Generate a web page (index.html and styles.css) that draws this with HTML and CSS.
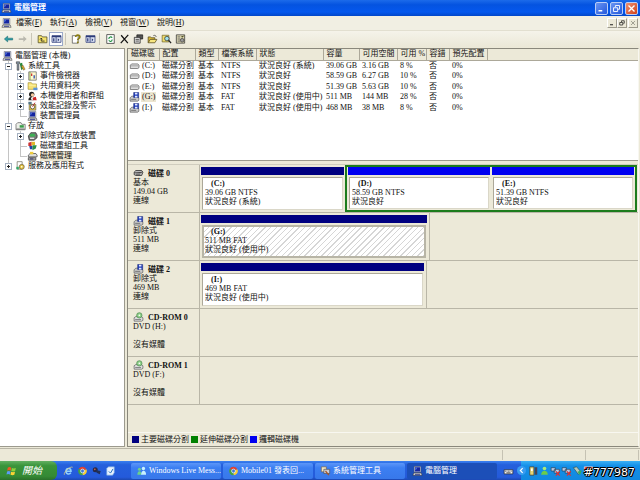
FILE: index.html
```html
<!DOCTYPE html>
<html lang="zh-TW">
<head>
    <meta charset="UTF-8">
    <meta name="viewport" content="width=device-width, initial-scale=1.0">
    <title>電腦管理</title>
    <link rel="stylesheet" href="styles.css">
</head>
<body>
    <!-- Iconos -->
    <svg class="sprite" aria-hidden="true">
        <symbol id="pc" viewBox="0 0 12 12"><path fill="#c9cdd8" stroke="#555b70" stroke-width=".6" d="M2 .6h8v7H2z"/><path fill="#1424a0" d="M3 1.6h6v5H3z"/><path fill="#5b83e8" d="M3.5 2h2L4 5h-.5z"/><path fill="#d8d8d8" stroke="#333" stroke-width=".6" d="M1.5 8.4h9l1 2.8H.5z"/><path stroke="#222a80" d="M3 10h6"/></symbol>
        <symbol id="tools" viewBox="0 0 12 12"><path fill="#89a" stroke="#333" stroke-width=".7" d="M1 1h4v2H4v8H2V3H1z"/><path fill="#2a8a3a" d="M5 3l3-1 1 7-2 2z"/><path fill="#d8a92e" stroke="#543" stroke-width=".5" d="M7 6l2-1 2.500 5-2 1z"/></symbol>
        <symbol id="event" viewBox="0 0 12 12"><path fill="#fffbd0" stroke="#555" stroke-width=".8" d="M1.500 1h9v10h-9z"/><path stroke="#7a9a40" d="M3 1v10"/><path stroke="#c33" stroke-width="1.500" d="M5 3v3"/><path stroke="#24a" stroke-width="1.500" d="M8 5v4"/></symbol>
        <symbol id="folder" viewBox="0 0 12 12"><path fill="#f7e275" stroke="#9a8420" stroke-width=".7" d="M.7 2h4l1 1.500h5v6.500h-10z"/><path fill="#fff6b0" d="M1.500 4.500h8.500v1H1.500z"/><path fill="#5a93d8" d="M7 8h5v3H7z"/></symbol>
        <symbol id="users" viewBox="0 0 12 12"><circle cx="5" cy="4" r="3.200" fill="#222"/><circle cx="6" cy="4.800" r="2" fill="#f3c9a0"/><path fill="#222" d="M1 11c0-3 2-4 4-4l2 4z"/><path fill="#c22" d="M6 8l4-1 1 4H6z"/><path fill="#fff" d="M4 8l2-.5.5 3.500H5z"/></symbol>
        <symbol id="perf" viewBox="0 0 12 12"><path fill="#e6c84a" stroke="#554" stroke-width=".7" d="M2 4h8v7H2z"/><circle cx="6" cy="7" r="2.500" fill="#fff" stroke="#333" stroke-width=".8"/><path stroke="#b22" d="M6 7l3-5"/><path fill="#578" d="M1 1h4v3H1z"/></symbol>
        <symbol id="store" viewBox="0 0 12 12"><path fill="#eef0ea" stroke="#555" stroke-width=".8" d="M.6 4l2-2h4l1 2h4v6.500H.6z"/><path fill="#3a9e4a" d="M5 5h5v3H5z"/><path fill="#777" d="M1 9h10v1.500H1z"/></symbol>
        <symbol id="removable" viewBox="0 0 12 12"><path fill="#777" stroke="#222" stroke-width=".8" d="M1 6l3-4h6l1.500 3v3L8 11H2z"/><ellipse cx="6" cy="5" rx="3.500" ry="2" fill="#3fae55"/><path fill="#eee" d="M3 8h5v1.500H3z"/></symbol>
        <symbol id="defrag" viewBox="0 0 12 12"><path fill="#c33" d="M1 2l4-1v5H1z"/><path fill="#e0b92c" d="M5 1h4v4H5z"/><path fill="#24a" d="M2 6h4v4H3z"/><path fill="#2a8f4a" d="M6 5h5l-1 4-4 2z"/></symbol>
        <symbol id="diskmgr" viewBox="0 0 12 12"><path fill="#ddd" stroke="#333" stroke-width=".8" d="M1 5l2-2h7l1.500 2v2H1z"/><path fill="#aaa" stroke="#333" stroke-width=".8" d="M1 8h9v3H1z"/><path fill="#eecb3c" d="M3 1h4v3H3z"/><path stroke="#226" d="M3 9.500h4"/></symbol>
        <symbol id="services" viewBox="0 0 12 12"><path fill="#fff" stroke="#665" stroke-width=".8" d="M2 .8h6v9H2z"/><circle cx="7.500" cy="7" r="3" fill="#e3c43e" stroke="#654" stroke-width=".8"/><circle cx="7.500" cy="7" r="1" fill="#fff"/><path fill="#3a6" d="M1 7h3v3H1z"/></symbol>
        <symbol id="drive" viewBox="0 0 12 12"><path fill="#ddd" stroke="#555" stroke-width=".8" d="M1 5l1.500-1.500h7.500L11.400 5v3l-1.500 1H1z"/><path stroke="#888" stroke-width=".8" d="M1 5.800h10"/></symbol>
        <symbol id="disk" viewBox="0 0 12 12"><path fill="#bbb" stroke="#222" stroke-width=".9" d="M.8 5l2-2h7l1.500 2-1.500 4H3L.8 8z"/><path stroke="#333" stroke-width=".8" d="M1 5.800h7l2.500-1M3 7.500h5"/></symbol>
        <symbol id="usb" viewBox="0 0 12 12"><path fill="#c9c9c9" stroke="#555" stroke-width=".8" d="M.7 7l2-2h6l2.500 2v3l-1.500 1h-9z"/><path fill="#1d39b8" stroke="#112070" stroke-width=".6" d="M5 .6h6v6H5z"/><path fill="#dfe8ff" d="M6.500 1h3v2h-3zM6.500 4.500h3v2h-3z"/><path stroke="#666" d="M2 8.800h6"/></symbol>
        <symbol id="cdrom" viewBox="0 0 12 12"><path fill="#ddd" stroke="#555" stroke-width=".8" d="M.7 7l2-1.500h7L11.300 7v3l-1.500 1h-9z"/><circle cx="7" cy="4" r="3.200" fill="#8fd08a" stroke="#36783a" stroke-width=".7"/><circle cx="7" cy="4" r="1" fill="#fff"/><path stroke="#777" d="M2 9h7"/></symbol>
        <symbol id="back" viewBox="0 0 12 12"><path fill="#2f9fa6" stroke="#136068" stroke-width=".6" d="M1 6l4-3.500V5h6v2.200H5v2.300z"/></symbol>
        <symbol id="fwd" viewBox="0 0 12 12"><path fill="#b9b8ae" d="M11 6L7 2.500V5H1.500v2.200H7v2.300z"/></symbol>
        <symbol id="up" viewBox="0 0 12 12"><path fill="#f6e36c" stroke="#4b471c" stroke-width=".9" d="M.8 2h4l1 1.500h5.500v7H.8z"/><path fill="none" stroke="#222" d="M8.500 8.500h-4V5M3 6.500L4.500 5 6 6.500"/></symbol>
        <symbol id="panes" viewBox="0 0 12 12"><path fill="#dfe6f6" stroke="#2b3a78" stroke-width=".9" d="M.6 2h10.800v8H.6z"/><path fill="#2b3a78" d="M.6 2h10.800v1.800H.6zM5 4h1v6H5zM2 5h1.500v4H2zM7.500 5v4l2-2z"/></symbol>
        <symbol id="help" viewBox="0 0 12 12"><path fill="#fff" stroke="#444" stroke-width=".8" d="M1 2h7v9H1z"/><path fill="none" stroke="#8a7d12" stroke-width="2" d="M5 3.500C5 .5 10 .8 10 3.500 10 5.500 7.500 5 7.500 7.500"/><path fill="#8a7d12" d="M6.500 9h2v2h-2z"/></symbol>
        <symbol id="refresh" viewBox="0 0 12 12"><path fill="#fff" stroke="#333" stroke-width=".9" d="M1.500.7h9v10.600h-9z"/><path fill="none" stroke="#1a8f3b" stroke-width="1.300" d="M4 6c0-3 3-3 4-1.500M8 6.500c0 3-3 3-4 1"/></symbol>
        <symbol id="delete" viewBox="0 0 12 12"><path stroke="#111" stroke-width="1.500" d="M2 1.500l8 9.500M10.500 1L1.500 11"/></symbol>
        <symbol id="props" viewBox="0 0 12 12"><path fill="#555" stroke="#111" stroke-width=".8" d="M4 1h7v5H4z"/><path fill="#ddd" stroke="#222" stroke-width=".9" d="M1 4h7v7H1z"/><path stroke="#444" d="M2.500 6.500h4M2.500 8.500h4"/></symbol>
        <symbol id="open" viewBox="0 0 12 12"><path fill="#d9b93a" stroke="#55491a" stroke-width=".9" d="M.8 10.500v-7h3l1 1h4v2"/><path fill="#f6e680" stroke="#55491a" stroke-width=".9" d="M.8 10.500l2.500-4h8l-2.500 4z"/><path fill="none" stroke="#222" stroke-width=".8" d="M7 2c2-1 3 0 3.500 1.500"/></symbol>
        <symbol id="find" viewBox="0 0 12 12"><path fill="#f0dc6a" stroke="#655a20" stroke-width=".8" d="M.8 1.500h8v8h-8z"/><circle cx="6.500" cy="5.500" r="2.700" fill="#9fe0ea" stroke="#333" stroke-width=".9"/><path stroke="#222" stroke-width="1.500" d="M8.500 7.500l3 3.500"/></symbol>
        <symbol id="settings" viewBox="0 0 12 12"><path fill="#ddd8b4" stroke="#333" stroke-width=".9" d="M1 1h10v10H1z"/><path stroke="#555" d="M2.500 3.500h3M2.500 6h3M2.500 8.500h3"/><circle cx="8" cy="7.500" r="2.200" fill="#999" stroke="#333" stroke-width=".8"/><path stroke="#6a6a20" d="M7 3l1 1 2-2"/></symbol>
        <symbol id="flag" viewBox="0 0 12 12"><path fill="#ee5a26" d="M1.500 2c1.500-1 3-1 4.200 0L5 5.700c-1.500-.8-2.700-.8-4.200 0z"/><path fill="#8ed03c" d="M6.500 2.400c1.500.8 3 .8 4.700 0l-.8 3.700c-1.500.8-3 .8-4.700 0z"/><path fill="#5a9cf5" d="M.7 6.500c1.500-.8 2.700-.8 4.200 0l-.8 3.700c-1.500-.9-2.700-.9-4.100 0z"/><path fill="#fcd335" d="M5.500 6.900c1.500.8 3 .8 4.700 0l-.8 3.700c-1.500.8-3 .8-4.600 0z"/></symbol>
        <symbol id="ie" viewBox="0 0 12 12"><path fill="none" stroke="#8fd0ff" stroke-width="1.900" d="M3 6.300h6C9 2 3.200 2 3 6.300c0 4 4.500 4 5.800 1.700"/><path fill="none" stroke="#e7d27a" stroke-width=".9" d="M1 10.500C0 7 8 0 11 1.500"/></symbol>
        <symbol id="chrome" viewBox="0 0 12 12"><path fill="#df4132" d="M6 6L1.500 3.300a5.200 5.200 0 0 1 9.200.5z"/><path fill="#f5cd35" d="M6 6l4.700-2.200A5.200 5.200 0 0 1 6 11.200z"/><path fill="#43a148" d="M6 6v5.200A5.200 5.200 0 0 1 1.500 3.300z"/><circle cx="6" cy="6" r="2.300" fill="#3d78d8" stroke="#fff" stroke-width=".8"/></symbol>
        <symbol id="camera" viewBox="0 0 12 12"><circle cx="4.500" cy="4.500" r="3" fill="#262a4a"/><circle cx="4" cy="4" r="1" fill="#e06548"/><path fill="#20305a" d="M6 5l5 1-1 4-4-2z"/></symbol>
        <symbol id="mail" viewBox="0 0 12 12"><path fill="#e9f3ff" stroke="#72a6dd" stroke-width=".8" d="M1.500 3l2-2h7v7l-2 3h-7z"/><path fill="none" stroke="#2670c0" stroke-width="1.200" d="M4 6.500l2 2 3-5"/></symbol>
        <symbol id="msn" viewBox="0 0 12 12"><g fill="#6bd08b"><circle cx="3.500" cy="3.800" r="1.800"/><path d="M1 10.500C1 5 6 5 6 10.500z"/></g><g fill="#c8f1ff"><circle cx="8.300" cy="3" r="2"/><path d="M5.500 10.500c0-6.500 6-6.500 6 0z"/></g></symbol>
        <symbol id="admin" viewBox="0 0 12 12"><path fill="#efe4c0" stroke="#654" stroke-width=".7" d="M1 1h6v6H1z"/><path fill="#c9cdd8" stroke="#444" stroke-width=".7" d="M4 4h7v5H4z"/><path stroke="#a52" stroke-width="1.500" d="M6 6l4 5"/></symbol>
        <symbol id="keyboard" viewBox="0 0 12 12"><path fill="#f4f4f4" stroke="#222" stroke-width=".8" d="M.8 4.500h10.400v5H.8z"/><path stroke="#333" stroke-dasharray="1 .7" d="M2 6.200h8"/><path stroke="#333" d="M3.500 8.200h5"/></symbol>
        <symbol id="power" viewBox="0 0 12 12"><path fill="#e6d574" stroke="#333" stroke-width=".8" d="M1.500 1h5v10h-5z"/><path fill="#445" d="M7.500 1.500h3v9h-3z"/><path fill="#fff" d="M3 3h2v3H3z"/></symbol>
        <symbol id="buddy" viewBox="0 0 12 12"><circle cx="6" cy="3" r="2.200" fill="#a8e879"/><path fill="#6ccc4a" d="M2 10.500C2 4 10 4 10 10.500z"/></symbol>
        <symbol id="net" viewBox="0 0 12 12"><path fill="#b8cbe8" stroke="#234" stroke-width=".7" d="M.8 2h5v4h-5zM4.500 4h6v4.500h-6z"/><path stroke="#e03030" stroke-width="1.500" d="M6.500 6.500l4.500 5M11 6.500l-4.500 5"/></symbol>
        <symbol id="eject" viewBox="0 0 12 12"><path fill="#b7c9bc" stroke="#244" stroke-width=".7" d="M1 2l4-1 5 6-3 3z"/><path fill="#38b058" d="M6 7l5-2-2 6z"/></symbol>
        <symbol id="shield" viewBox="0 0 12 12"><path fill="#e23b34" stroke="#fff" stroke-width=".7" d="M1 1h10v6l-5 4.500L1 7z"/></symbol>
    </svg>

    <header class="titlebar">
        <svg class="icon"><use href="#pc"/></svg>
        <h1>電腦管理</h1>
        <div class="window-buttons">
            <button aria-label="最小化"><svg viewBox="0 0 12 12"><path stroke="#fff" stroke-width="2" d="M2 9h5"/></svg></button>
            <button aria-label="還原"><svg viewBox="0 0 12 12"><path fill="none" stroke="#fff" stroke-width="1.200" d="M4.500 4V2H10v5H8M2 5h5.500v5H2z"/></svg></button>
            <button class="close" aria-label="關閉"><svg viewBox="0 0 12 12"><path stroke="#fff" stroke-width="1.800" d="M2 2l8 8M10 2l-8 8"/></svg></button>
        </div>
    </header>

    <nav class="menubar">
        <svg class="icon"><use href="#pc"/></svg>
        <button>檔案(<u>F</u>)</button>
        <button>執行(<u>A</u>)</button>
        <button>檢視(<u>V</u>)</button>
        <button>視窗(<u>W</u>)</button>
        <button>說明(<u>H</u>)</button>
        <div class="mdi-buttons">
            <button aria-label="最小化"><svg viewBox="0 0 12 12"><path stroke="#222" stroke-width="2" d="M2 9.500h6"/></svg></button>
            <button aria-label="還原"><svg viewBox="0 0 12 12"><path fill="none" stroke="#222" stroke-width="1.500" d="M5 4V1.500h5.500v5H8.500M1.500 5h6v5h-6z"/></svg></button>
            <button class="off" aria-label="關閉"><svg viewBox="0 0 12 12"><path stroke="#9a988c" stroke-width="1.800" d="M2 2l8 8M10 2l-8 8"/></svg></button>
        </div>
    </nav>

    <div class="toolbar">
        <button aria-label="上一頁"><svg class="icon"><use href="#back"/></svg></button>
        <button aria-label="下一頁"><svg class="icon"><use href="#fwd"/></svg></button>
        <i class="sep"></i>
        <button aria-label="上一層"><svg class="icon"><use href="#up"/></svg></button>
        <button class="pressed" aria-label="顯示樹狀目錄"><svg class="icon"><use href="#panes"/></svg></button>
        <i class="sep"></i>
        <button aria-label="說明"><svg class="icon"><use href="#help"/></svg></button>
        <button aria-label="窗格"><svg class="icon"><use href="#panes"/></svg></button>
        <i class="sep"></i>
        <button aria-label="重新整理"><svg class="icon"><use href="#refresh"/></svg></button>
        <button aria-label="刪除"><svg class="icon"><use href="#delete"/></svg></button>
        <button aria-label="內容"><svg class="icon"><use href="#props"/></svg></button>
        <button aria-label="開啟"><svg class="icon"><use href="#open"/></svg></button>
        <button aria-label="尋找"><svg class="icon"><use href="#find"/></svg></button>
        <button aria-label="設定"><svg class="icon"><use href="#settings"/></svg></button>
    </div>

    <main class="content">
        <aside class="tree">
            <div class="node"><svg class="icon"><use href="#pc"/></svg><span>電腦管理 (本機)</span></div>
            <ul class="branch">
                <li>
                    <div class="node"><i class="box"></i><svg class="icon"><use href="#tools"/></svg><span>系統工具</span></div>
                    <ul class="branch">
                        <li class="node"><i class="box plus"></i><svg class="icon"><use href="#event"/></svg><span>事件檢視器</span></li>
                        <li class="node"><i class="box plus"></i><svg class="icon"><use href="#folder"/></svg><span>共用資料夾</span></li>
                        <li class="node"><i class="box plus"></i><svg class="icon"><use href="#users"/></svg><span>本機使用者和群組</span></li>
                        <li class="node"><i class="box plus"></i><svg class="icon"><use href="#perf"/></svg><span>效能記錄及警示</span></li>
                        <li class="node"><i class="stub"></i><svg class="icon"><use href="#pc"/></svg><span>裝置管理員</span></li>
                    </ul>
                </li>
                <li>
                    <div class="node"><i class="box"></i><svg class="icon"><use href="#store"/></svg><span>存放</span></div>
                    <ul class="branch">
                        <li class="node"><i class="box plus"></i><svg class="icon"><use href="#removable"/></svg><span>卸除式存放裝置</span></li>
                        <li class="node"><i class="stub"></i><svg class="icon"><use href="#defrag"/></svg><span>磁碟重組工具</span></li>
                        <li class="node"><i class="stub"></i><svg class="icon"><use href="#diskmgr"/></svg><span class="selected">磁碟管理</span></li>
                    </ul>
                </li>
                <li class="node"><i class="box plus"></i><svg class="icon"><use href="#services"/></svg><span>服務及應用程式</span></li>
            </ul>
        </aside>

        <section class="panel">
            <div class="volumes">
                <table>
                    <colgroup>
                        <col class="w31"><col class="w36"><col class="w23"><col class="w38"><col class="w67"><col class="w36"><col class="w38"><col class="w29"><col class="w23"><col class="w38"><col>
                    </colgroup>
                    <thead>
                        <tr><th>磁碟區</th><th>配置</th><th>類型</th><th>檔案系統</th><th>狀態</th><th>容量</th><th>可用空間</th><th>可用 %</th><th>容錯</th><th>預先配置</th><th></th></tr>
                    </thead>
                    <tbody>
                        <tr><td><svg class="icon"><use href="#drive"/></svg><span>(C:)</span></td><td>磁碟分割</td><td>基本</td><td>NTFS</td><td>狀況良好 (系統)</td><td>39.06 GB</td><td>3.16 GB</td><td>8 %</td><td>否</td><td>0%</td><td></td></tr>
                        <tr><td><svg class="icon"><use href="#drive"/></svg><span>(D:)</span></td><td>磁碟分割</td><td>基本</td><td>NTFS</td><td>狀況良好</td><td>58.59 GB</td><td>6.27 GB</td><td>10 %</td><td>否</td><td>0%</td><td></td></tr>
                        <tr><td><svg class="icon"><use href="#drive"/></svg><span>(E:)</span></td><td>磁碟分割</td><td>基本</td><td>NTFS</td><td>狀況良好</td><td>51.39 GB</td><td>5.63 GB</td><td>10 %</td><td>否</td><td>0%</td><td></td></tr>
                        <tr><td><svg class="icon"><use href="#usb"/></svg><span class="selected">(G:)</span></td><td>磁碟分割</td><td>基本</td><td>FAT</td><td>狀況良好 (使用中)</td><td>511 MB</td><td>144 MB</td><td>28 %</td><td>否</td><td>0%</td><td></td></tr>
                        <tr><td><svg class="icon"><use href="#usb"/></svg><span>(I:)</span></td><td>磁碟分割</td><td>基本</td><td>FAT</td><td>狀況良好 (使用中)</td><td>468 MB</td><td>38 MB</td><td>8 %</td><td>否</td><td>0%</td><td></td></tr>
                    </tbody>
                </table>
            </div>

            <div class="disks">
                <div class="disk">
                    <div class="disk-label">
                        <h2><svg class="icon"><use href="#disk"/></svg>磁碟 0</h2>
                        <p>基本</p><p>149.04 GB</p><p>連線</p>
                    </div>
                    <div class="parts full">
                        <div class="part primary system">
                            <div class="info"><h3>(C:)</h3><p>39.06 GB NTFS</p><p>狀況良好 (系統)</p></div>
                        </div>
                        <div class="extended">
                            <div class="part logical">
                                <div class="info"><h3>(D:)</h3><p>58.59 GB NTFS</p><p>狀況良好</p></div>
                            </div>
                            <div class="part logical">
                                <div class="info"><h3>(E:)</h3><p>51.39 GB NTFS</p><p>狀況良好</p></div>
                            </div>
                        </div>
                    </div>
                </div>
                <div class="disk">
                    <div class="disk-label">
                        <h2><svg class="icon"><use href="#usb"/></svg>磁碟 1</h2>
                        <p>卸除式</p><p>511 MB</p><p>連線</p>
                    </div>
                    <div class="parts medium">
                        <div class="part primary">
                            <div class="info hatched"><h3>(G:)</h3><p>511 MB FAT</p><p>狀況良好 (使用中)</p></div>
                        </div>
                    </div>
                </div>
                <div class="disk">
                    <div class="disk-label">
                        <h2><svg class="icon"><use href="#usb"/></svg>磁碟 2</h2>
                        <p>卸除式</p><p>469 MB</p><p>連線</p>
                    </div>
                    <div class="parts small">
                        <div class="part primary">
                            <div class="info"><h3>(I:)</h3><p>469 MB FAT</p><p>狀況良好 (使用中)</p></div>
                        </div>
                    </div>
                </div>
                <div class="disk">
                    <div class="disk-label">
                        <h2><svg class="icon"><use href="#cdrom"/></svg>CD-ROM 0</h2>
                        <p>DVD (H:)</p><p>&nbsp;</p><p>沒有媒體</p>
                    </div>
                </div>
                <div class="disk">
                    <div class="disk-label">
                        <h2><svg class="icon"><use href="#cdrom"/></svg>CD-ROM 1</h2>
                        <p>DVD (F:)</p><p>&nbsp;</p><p>沒有媒體</p>
                    </div>
                </div>
            </div>

            <div class="legend">
                <span><i class="navy"></i>主要磁碟分割</span>
                <span><i class="green"></i>延伸磁碟分割</span>
                <span><i class="blue"></i>邏輯磁碟機</span>
            </div>
        </section>
    </main>

    <div class="statusbar"><span></span><span></span><span></span></div>

    <footer class="taskbar">
        <button class="start"><svg class="icon"><use href="#flag"/></svg>開始</button>
        <div class="quick">
            <button aria-label="Internet Explorer"><svg class="icon"><use href="#ie"/></svg></button>
            <button aria-label="Chrome"><svg class="icon"><use href="#chrome"/></svg></button>
            <button aria-label="相機"><svg class="icon"><use href="#camera"/></svg></button>
            <button aria-label="郵件"><svg class="icon"><use href="#mail"/></svg></button>
        </div>
        <div class="tasks">
            <button><svg class="icon"><use href="#msn"/></svg>Windows Live Mess...</button>
            <button><svg class="icon"><use href="#chrome"/></svg>Mobile01 發表回...</button>
            <button><svg class="icon"><use href="#admin"/></svg>系統管理工具</button>
            <button class="active"><svg class="icon"><use href="#pc"/></svg>電腦管理</button>
        </div>
        <svg class="icon lang"><use href="#keyboard"/></svg>
        <div class="tray">
            <button class="expand" aria-label="展開"><svg viewBox="0 0 12 12"><path fill="none" stroke="#fff" stroke-width="2" d="M8 2L4 6l4 4"/></svg></button>
            <svg class="icon"><use href="#power"/></svg>
            <svg class="icon"><use href="#buddy"/></svg>
            <svg class="icon"><use href="#net"/></svg>
            <svg class="icon"><use href="#net"/></svg>
            <svg class="icon"><use href="#eject"/></svg>
            <svg class="icon"><use href="#shield"/></svg>
        </div>
    </footer>
    <div class="watermark">#777987</div>
</body>
</html>
```
FILE: styles.css
```css
* {
    margin: 0;
    padding: 0;
    box-sizing: border-box;
}

body {
    height: 100vh;
    display: flex;
    flex-direction: column;
    overflow: hidden;
    background: #ece9d8;
    color: #111;
    font: 8px/10px "Liberation Serif", "Noto Sans CJK TC", serif;
    white-space: nowrap;
}

button {
    border: none;
    background: none;
    color: inherit;
    font: inherit;
    white-space: nowrap;
}

i {
    flex: none;
}

ul {
    list-style: none;
}

.sprite {
    display: none;
}

.icon {
    width: 11px;
    height: 10px;
    flex: none;
    display: block;
}

.selected {
    background: #ece5d0;
}

/* Barra de título */
.titlebar {
    flex: none;
    height: 16px;
    padding: 0 2px 0 1px;
    display: flex;
    align-items: center;
    gap: 2px;
    background: linear-gradient(#1c6bea, #0453e0 30%, #0558ee 75%, #0347c8);
    color: #fff;
}

.titlebar h1 {
    font-size: 8px;
    line-height: 10px;
}

.window-buttons {
    margin-left: auto;
    display: flex;
    gap: 2px;
}

.window-buttons button {
    width: 13px;
    height: 13px;
    padding: 1px;
    border: 1px solid #b9cdf6;
    border-radius: 2px;
    background: linear-gradient(135deg, #6a95f2, #2358dc);
}

.window-buttons .close {
    background: linear-gradient(135deg, #ee9273, #d0401a);
}

.window-buttons svg,
.mdi-buttons svg,
.expand svg {
    width: 100%;
    height: 100%;
    display: block;
}

/* Menú */
.menubar {
    flex: none;
    height: 14px;
    padding: 0 2px 0 1px;
    display: flex;
    align-items: center;
    gap: 8px;
    background: #f1efe3;
}

.menubar .icon {
    margin-right: -4px;
}

.mdi-buttons {
    margin-left: auto;
    display: flex;
}

.mdi-buttons button {
    width: 10px;
    height: 10px;
    padding: 1px;
    border: 1px solid;
    border-color: #fff #9d9a8c #9d9a8c #fff;
    background: #ece9d8;
}

.mdi-buttons .off {
    margin-left: 1px;
}

/* Barra de herramientas */
.toolbar {
    flex: none;
    height: 17px;
    padding: 0 1px;
    display: flex;
    align-items: center;
    border-top: 1px solid #e2dfd0;
    background: linear-gradient(#f5f3ea, #ebe8d7);
}

.toolbar button {
    width: 14px;
    height: 14px;
    padding: 1px;
    border: 1px solid transparent;
}

.toolbar button.pressed {
    border-color: #9ba9c8;
    background: #fff;
}

.toolbar .sep {
    width: 1px;
    height: 12px;
    margin: 0 3px 0 2px;
    background: #c9c6b7;
}

.content {
    flex: 1;
    min-height: 0;
    padding: 1px 1px 1px 0;
    display: flex;
    gap: 2px;
}

/* Árbol */
.tree {
    flex: none;
    width: 125px;
    padding: 2px 1px 0 2px;
    border: 1px solid #9c9a8e;
    border-left: none;
    background: #fff;
}

.node {
    height: 10px;
    display: flex;
    align-items: center;
}

.node .icon {
    margin-right: 2px;
}

.branch {
    padding-left: 3px;
    background: linear-gradient(#c4c4c4, #c4c4c4) 6px 0 / 1px calc(100% - 5px) no-repeat;
}

.branch .branch {
    padding-left: 12px;
    background-position: 15px 0;
}

.box {
    width: 7px;
    height: 7px;
    margin-right: 3px;
    border: 1px solid #a4b0c0;
    background: linear-gradient(#222, #222) 1px 2px / 3px 1px no-repeat, #fff;
}

.box.plus {
    background: linear-gradient(#222, #222) 1px 2px / 3px 1px no-repeat, linear-gradient(#222, #222) 2px 1px / 1px 3px no-repeat, #fff;
}

.stub {
    width: 7px;
    height: 1px;
    margin-left: 3px;
    background: #c4c4c4;
}

/* Panel derecho */
.panel {
    flex: 1;
    min-width: 0;
    display: flex;
    flex-direction: column;
    border: 1px solid #8a887c;
    border-right-color: #f8f7f0;
}

.volumes {
    flex: none;
    height: 112px;
    background: #fff;
    border-bottom: 1px solid #9c9a8e;
}

table {
    width: 100%;
    height: 64px;
    table-layout: fixed;
    border-collapse: collapse;
}

.w23 { width: 23px; }
.w29 { width: 29px; }
.w31 { width: 31px; }
.w36 { width: 36px; }
.w38 { width: 38px; }
.w67 { width: 67px; }

th {
    height: 11px;
    padding: 0 0 0 3px;
    border-right: 1px solid #aca899;
    border-bottom: 1px solid #aca899;
    background: #ece9d8;
    font-weight: normal;
    text-align: left;
}

th:last-child {
    border-right: none;
}

td {
    padding: 0 0 0 3px;
}

td:first-child {
    padding-left: 1px;
}

td .icon,
td .icon + span {
    display: inline-block;
    vertical-align: middle;
}

td .icon + span {
    margin-left: 1px;
    padding: 0 1px;
}

/* Discos */
.disks {
    flex: 1;
    min-height: 0;
    margin-top: 3px;
    border-top: 1px solid #d0cdbe;
}

.disk {
    height: 48px;
    display: flex;
    border-bottom: 1px solid #b9b6a7;
    line-height: 9px;
}

.disk-label {
    flex: none;
    width: 72px;
    padding: 3px 0 0 5px;
    border-right: 1px solid #b9b6a7;
}

.disk-label h2 {
    display: flex;
    align-items: center;
    gap: 4px;
    font-size: 8px;
    line-height: 9px;
}

.disk-label p,
.info p {
    height: 9px;
}

.parts {
    display: flex;
    padding: 2px 2px 1px 1px;
}

.parts.full {
    flex: 1;
    padding: 0 1px 0 1px;
}

.parts.medium {
    width: 230px;
    border-right: 1px solid #b9b6a7;
}

.parts.small {
    width: 227px;
    border-right: 1px solid #b9b6a7;
}

.part {
    flex: 1;
    display: flex;
    flex-direction: column;
    gap: 2px;
}

.part::before {
    content: "";
    height: 8px;
}

.primary::before {
    background: #000080;
}

.logical::before {
    background: #0000f0;
}

.system {
    padding: 2px 0 1px;
}

.info {
    flex: 1;
    margin: 0 1px 1px;
    padding: 1px 0 0 2px;
    border: 1px solid;
    border-color: #aca899 #dad7c8 #dad7c8 #aca899;
    background: #fff;
}

.hatched {
    border: 2px solid #b8b5a6;
    padding: 0 0 0 1px;
    background: repeating-linear-gradient(135deg, #fff 0 3px, #d6d6d6 3px 4px);
}

.info h3 {
    padding-left: 6px;
    font-size: 8px;
    line-height: 9px;
}

.extended {
    flex: 2;
    display: flex;
    gap: 2px;
    margin-left: 1px;
    padding: 0 1px;
    border: 2px solid #1c7c1c;
}

.legend {
    flex: none;
    height: 14px;
    padding-left: 4px;
    display: flex;
    align-items: center;
    gap: 2px;
    border-top: 1px solid #f8f7f0;
}

.legend span {
    display: flex;
    align-items: center;
    gap: 2px;
}

.legend i {
    width: 7px;
    height: 7px;
}

.navy { background: #000080; }
.green { background: #008000; }
.blue { background: #0000f0; }

/* Barra de estado */
.statusbar {
    flex: none;
    height: 13px;
    padding: 1px;
    display: flex;
    border-top: 1px solid #b9b6a7;
}

.statusbar span {
    flex: 1;
    border-right: 1px solid #c5c2b3;
}

.statusbar span + span {
    flex: none;
    width: 83px;
}

.statusbar span:last-child {
    width: 53px;
}

/* Barra de tareas */
.taskbar {
    flex: none;
    height: 19px;
    display: flex;
    align-items: center;
    background: linear-gradient(#3a80f0, #2560dc 20%, #245adb 85%, #1c48b0);
    color: #fff;
}

.start {
    width: 57px;
    height: 19px;
    padding-left: 6px;
    display: flex;
    align-items: center;
    gap: 5px;
    border-radius: 0 6px 6px 0;
    background: linear-gradient(#62b062, #3a943a 25%, #358a35 80%, #2a702a);
    font-size: 10px;
    font-style: italic;
}

.quick {
    width: 74px;
    padding-left: 6px;
    display: flex;
    gap: 3px;
}

.tasks {
    flex: 1;
    display: flex;
    gap: 2px;
}

.tasks button {
    flex: 1;
    max-width: 90px;
    min-width: 0;
    height: 16px;
    padding-left: 5px;
    display: flex;
    align-items: center;
    gap: 2px;
    overflow: hidden;
    border-radius: 2px;
    background: linear-gradient(#5c96f8, #3c7ff2 30%, #3878ea);
}

.tasks button.active {
    background: #1c4fb8;
}

.lang {
    margin: 0 7px 0 4px;
}

.tray {
    width: 119px;
    height: 19px;
    display: flex;
    align-items: center;
    background: linear-gradient(#3ab0f5, #1490e8 25%, #1288e0);
}

.expand {
    width: 9px;
    height: 9px;
    margin: 0 2px 0 -4px;
    padding: 1px;
    border-radius: 50%;
    background: #3a9cf0;
}

.watermark {
    position: absolute;
    right: 5px;
    bottom: 1px;
    color: #fff;
    font: 11px/13px "DejaVu Sans", sans-serif;
    text-shadow: 1px 0 #000, -1px 0 #000, 0 1px #000, 0 -1px #000, 1px 1px #000, -1px -1px #000;
}
```
